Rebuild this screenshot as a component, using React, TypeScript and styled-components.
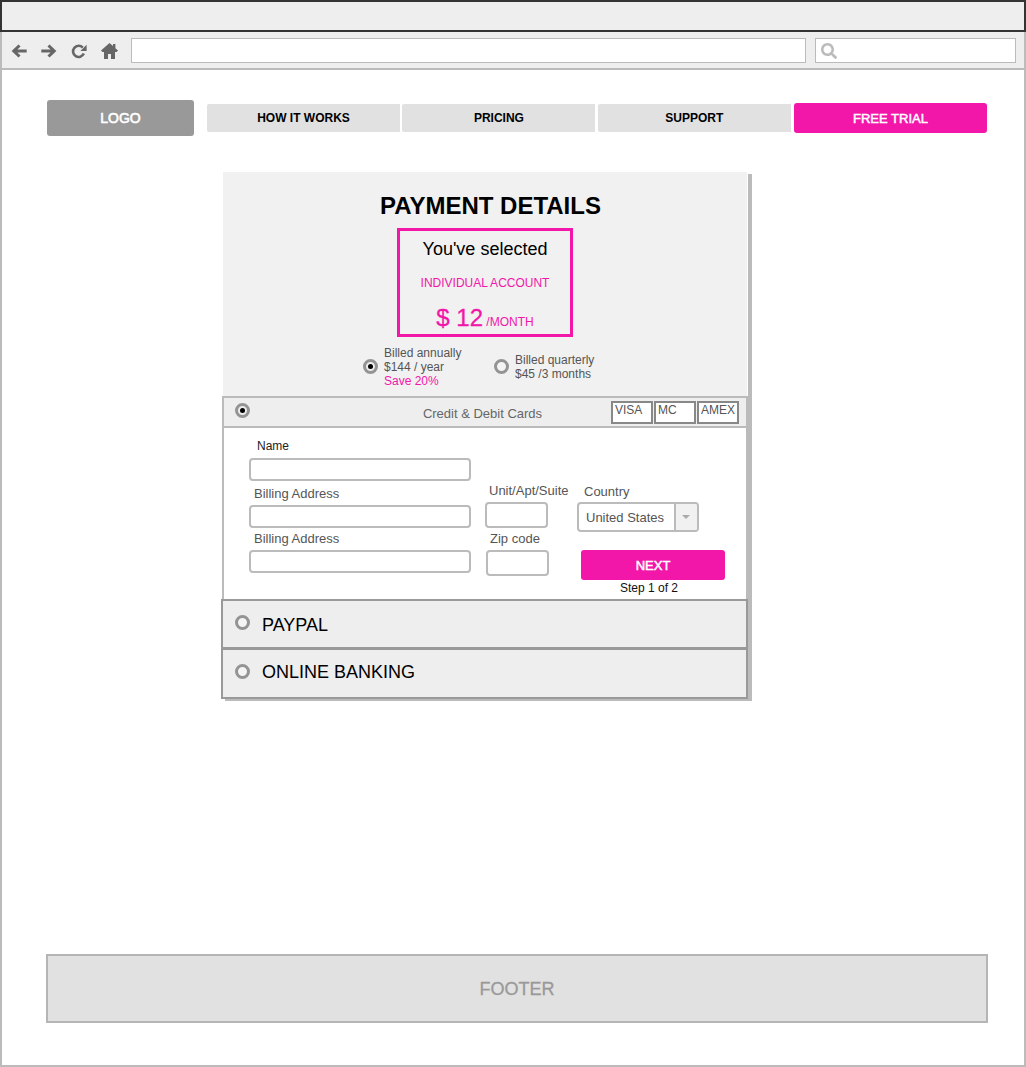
import React from "react";
import styled, { createGlobalStyle } from "styled-components";
import { FaSearch } from "react-icons/fa";

const PINK = "#f216a9";

const BackIcon = () => (
  <svg width="16" height="16" viewBox="0 0 16 16" fill="none" stroke="currentColor" strokeWidth="3">
    <path d="M8.5 2.5 L2.8 8 L8.5 13.5 M3.5 8 H15.7" />
  </svg>
);

const ForwardIcon = () => (
  <svg width="16" height="16" viewBox="0 0 16 16" fill="none" stroke="currentColor" strokeWidth="3">
    <path d="M7.5 2.5 L13.2 8 L7.5 13.5 M12.5 8 H0.3" />
  </svg>
);

const ReloadIcon = () => (
  <svg width="16" height="16" viewBox="0 0 16 16">
    <path d="M11.8 4.6 A5.6 5.6 0 1 0 12.8 10.6" fill="none" stroke="currentColor" strokeWidth="2.6" />
    <path d="M15.6 1.8 V8 H9.4 Z" fill="currentColor" />
  </svg>
);

const HomeIcon = () => (
  <svg width="17" height="16" viewBox="0 0 17 16" fill="currentColor">
    <path d="M8.5 0 L12 3.1 V1 H14.4 V5.3 L17 7.6 L15.6 9 H14 V16 H10 V11 H7 V16 H3 V9 H1.4 L0 7.6 Z" />
  </svg>
);

const App = () => {
  return (
    <Frame>
      <GlobalStyle />
      <TitleBar />
      <Toolbar>
        <ToolIcons>
          <BackIcon />
          <ForwardIcon />
          <ReloadIcon />
          <HomeIcon />
        </ToolIcons>
        <AddressBox />
        <SearchBox>
          <FaSearch />
        </SearchBox>
      </Toolbar>
      <Page>
        <Header>
          <Logo>LOGO</Logo>
          <Nav>
            <NavItem>HOW IT WORKS</NavItem>
            <NavItem>PRICING</NavItem>
            <NavItem>SUPPORT</NavItem>
            <TrialButton>FREE TRIAL</TrialButton>
          </Nav>
        </Header>
        <Card>
          <Summary>
            <Title>PAYMENT DETAILS</Title>
            <SelectedBox>
              <SelectedLabel>You've selected</SelectedLabel>
              <AccountName>INDIVIDUAL ACCOUNT</AccountName>
              <Price>
                $ 12<small> /MONTH</small>
              </Price>
            </SelectedBox>
            <BillingRow>
              <BillingOption>
                <BillingRadio $checked />
                <BillingText>
                  Billed annually
                  <br />
                  $144 / year
                  <br />
                  <Save>Save 20%</Save>
                </BillingText>
              </BillingOption>
              <BillingOption>
                <BillingRadio />
                <BillingText>
                  Billed quarterly
                  <br />
                  $45 /3 months
                </BillingText>
              </BillingOption>
            </BillingRow>
          </Summary>
          <CardsHead>
            <RadioSlot>
              <Radio $checked />
            </RadioSlot>
            <CardsTitle>Credit &amp; Debit Cards</CardsTitle>
            <Badges>
              <Badge>VISA</Badge>
              <Badge>MC</Badge>
              <Badge>AMEX</Badge>
            </Badges>
          </CardsHead>
          <FormPanel>
            <WideColumn>
              <NameLabel>Name</NameLabel>
              <WideInput />
              <Label $left={5} $top={6} $bottom={4}>
                Billing Address
              </Label>
              <WideInput />
              <Label $left={5} $top={4} $bottom={4}>
                Billing Address
              </Label>
              <WideInput />
            </WideColumn>
            <SmallColumn>
              <Label $left={4} $bottom={4}>
                Unit/Apt/Suite
              </Label>
              <SmallInput />
              <Label $left={5} $top={4} $bottom={4}>
                Zip code
              </Label>
              <SmallInput $shift={1} />
            </SmallColumn>
            <ActionColumn>
              <Label $left={7} $bottom={4}>
                Country
              </Label>
              <Select>
                <SelectValue>United States</SelectValue>
                <SelectArrow />
              </Select>
              <NextButton>NEXT</NextButton>
              <StepText>Step 1 of 2</StepText>
            </ActionColumn>
          </FormPanel>
          <MethodRow>
            <Radio />
            <MethodName>PAYPAL</MethodName>
          </MethodRow>
          <MethodRow $last>
            <Radio />
            <MethodName $raised>ONLINE BANKING</MethodName>
          </MethodRow>
        </Card>
        <Footer>FOOTER</Footer>
      </Page>
    </Frame>
  );
};

export default App;

const GlobalStyle = createGlobalStyle`
  html, body {
    margin: 0;
    padding: 0;
    background: #fff;
  }
  * {
    box-sizing: border-box;
  }
`;

const Frame = styled.div`
  width: 1026px;
  height: 1067px;
  display: flex;
  flex-direction: column;
  background: #fff;
  border: 2px solid #bbb;
  border-top: 0;
  font-family: "Liberation Sans", Arial, sans-serif;
`;

const TitleBar = styled.div`
  height: 32px;
  margin: 0 -2px;
  background: #eee;
  border: 2px solid #333;
`;

const Toolbar = styled.div`
  height: 38px;
  display: flex;
  align-items: flex-start;
  padding: 6px 8px 0 8px;
  background: #eee;
  border-bottom: 2px solid #bbb;
`;

const ToolIcons = styled.div`
  width: 121px;
  height: 25px;
  display: flex;
  align-items: center;
  gap: 14px;
  padding-left: 1px;
  color: #666;
  svg {
    flex: none;
  }
`;

const AddressBox = styled.div`
  width: 675px;
  height: 25px;
  background: #fff;
  border: 1px solid #bbb;
`;

const SearchBox = styled.div`
  width: 201px;
  height: 25px;
  margin-left: 9px;
  display: flex;
  align-items: center;
  padding-left: 5px;
  background: #fff;
  border: 1px solid #bbb;
  color: #bbb;
  font-size: 16px;
`;

const Page = styled.div`
  flex: 1;
  display: flex;
  flex-direction: column;
  padding: 30px 36px 42px 45px;
`;

const Header = styled.div`
  display: flex;
  align-items: center;
  gap: 13px;
`;

const Logo = styled.div`
  width: 147px;
  height: 36px;
  display: flex;
  align-items: center;
  justify-content: center;
  background: #999;
  border-radius: 3px;
  color: #fff;
  font-size: 14px;
  -webkit-text-stroke: 0.6px #fff;
`;

const Nav = styled.nav`
  display: flex;
  align-items: center;
  gap: 2.4px;
`;

const NavItem = styled.div`
  width: 193px;
  height: 28px;
  display: flex;
  align-items: center;
  justify-content: center;
  background: #e1e1e1;
  border-radius: 2px 0 0 2px;
  color: #000;
  font-size: 12px;
  font-weight: 700;
`;

const TrialButton = styled.div`
  width: 193px;
  height: 30px;
  margin-left: 0.8px;
  display: flex;
  align-items: center;
  justify-content: center;
  background: ${PINK};
  border-radius: 3px;
  color: #fff;
  font-size: 13px;
  -webkit-text-stroke: 0.5px #fff;
`;

const Card = styled.section`
  width: 527px;
  margin: 36px 0 0 174px;
  box-shadow: 4px 2px 0 #bbb;
`;

const Summary = styled.div`
  height: 224px;
  margin-left: 2px;
  margin-right: 1px;
  display: flex;
  flex-direction: column;
  align-items: center;
  padding-top: 20px;
  background: #f1f1f1;
`;

const Title = styled.h1`
  margin: 0 0 0 11px;
  font-size: 24px;
  line-height: 28px;
  font-weight: 700;
  color: #000;
`;

const SelectedBox = styled.div`
  width: 176px;
  height: 109px;
  margin-top: 8px;
  display: flex;
  flex-direction: column;
  align-items: center;
  border: 3px solid ${PINK};
  color: ${PINK};
`;

const SelectedLabel = styled.div`
  margin-top: 7px;
  font-size: 18px;
  line-height: 22px;
  color: #000;
`;

const AccountName = styled.div`
  margin-top: 16px;
  font-size: 12px;
  line-height: 14px;
`;

const Price = styled.div`
  margin-top: 13px;
  font-size: 24px;
  line-height: 29px;
  -webkit-text-stroke: 0.3px ${PINK};
  small {
    font-size: 12px;
    -webkit-text-stroke: 0;
  }
`;

const BillingRow = styled.div`
  width: 100%;
  display: flex;
  align-items: center;
  padding-left: 140px;
  margin-top: 9px;
`;

const BillingOption = styled.div`
  width: 131px;
  display: flex;
  align-items: center;
  gap: 6px;
`;

const BillingText = styled.div`
  font-size: 12px;
  line-height: 14px;
  color: #555;
`;

const Save = styled.span`
  color: ${PINK};
`;

const Radio = styled.span<{ $checked?: boolean }>`
  flex: none;
  width: 15px;
  height: 15px;
  display: flex;
  align-items: center;
  justify-content: center;
  border: 3.5px solid #949494;
  border-radius: 50%;
  background: ${(props) => (props.$checked ? "#eee" : "#f4f4f4")};
  &::after {
    content: "";
    display: ${(props) => (props.$checked ? "block" : "none")};
    width: 5px;
    height: 5px;
    border-radius: 50%;
    background: #000;
  }
`;

const BillingRadio = styled(Radio)`
  margin-bottom: 2px;
`;

const CardsHead = styled.div`
  height: 32px;
  margin-left: 1px;
  display: flex;
  align-items: flex-start;
  padding: 5px 7px 0 11px;
  background: #eee;
  border: 2px solid #bbb;
`;

const RadioSlot = styled.div`
  width: 15px;
`;

const CardsTitle = styled.div`
  width: 361px;
  padding: 4px 0 0 104px;
  text-align: center;
  font-size: 13px;
  line-height: 14px;
  color: #666;
`;

const Badges = styled.div`
  display: flex;
  gap: 1px;
  margin-top: -2px;
`;

const Badge = styled.div`
  width: 42px;
  height: 23px;
  padding: 0 0 0 2px;
  background: #fff;
  border: 2px solid #888;
  font-size: 12px;
  line-height: 14px;
  color: #555;
`;

const FormPanel = styled.div`
  height: 172px;
  margin-left: 1px;
  display: flex;
  padding-left: 25px;
  background: #fff;
  border-left: 2px solid #bbb;
  border-right: 2px solid #bbb;
`;

const WideColumn = styled.div`
  width: 222px;
  display: flex;
  flex-direction: column;
  padding-top: 11px;
`;

const SmallColumn = styled.div`
  width: 92px;
  margin-left: 14px;
  display: flex;
  flex-direction: column;
  padding-top: 56px;
`;

const ActionColumn = styled.div`
  width: 148px;
  display: flex;
  flex-direction: column;
  align-items: flex-start;
  padding-top: 57px;
`;

const Label = styled.div<{ $left?: number; $top?: number; $bottom?: number }>`
  margin: ${(props) => props.$top ?? 0}px 0 ${(props) => props.$bottom ?? 5}px ${(props) => props.$left ?? 0}px;
  font-size: 13px;
  line-height: 14px;
  white-space: nowrap;
  color: #555;
`;

const NameLabel = styled.div`
  margin: 0 0 5px 8px;
  font-size: 12px;
  line-height: 14px;
  color: #222;
`;

const WideInput = styled.div`
  width: 222px;
  height: 23px;
  background: #fff;
  border: 2px solid #bbb;
  border-radius: 4px;
`;

const SmallInput = styled.div<{ $shift?: number }>`
  width: 63px;
  height: 26px;
  margin-left: ${(props) => props.$shift ?? 0}px;
  background: #fff;
  border: 2px solid #bbb;
  border-radius: 4px;
`;

const Select = styled.div`
  width: 122px;
  height: 30px;
  margin-top: -1px;
  display: flex;
  overflow: hidden;
  border: 2px solid #bbb;
  border-radius: 4px;
`;

const SelectValue = styled.div`
  flex: 1;
  padding-left: 7px;
  font-size: 13px;
  line-height: 27px;
  color: #555;
`;

const SelectArrow = styled.div`
  position: relative;
  width: 23px;
  background: #f1f1f1;
  border-left: 2px solid #bbb;
  &::after {
    content: "";
    position: absolute;
    left: 6px;
    top: 11px;
    border: 4px solid transparent;
    border-top: 4px solid #aaa;
  }
`;

const NextButton = styled.div`
  width: 144px;
  height: 30px;
  margin: 18px 0 0 4px;
  display: flex;
  align-items: center;
  justify-content: center;
  background: ${PINK};
  border-radius: 3px;
  color: #fff;
  font-size: 13px;
  -webkit-text-stroke: 0.5px #fff;
`;

const StepText = styled.div`
  width: 144px;
  margin-top: 1px;
  text-align: center;
  font-size: 12px;
  line-height: 14px;
  color: #111;
`;

const MethodRow = styled.div<{ $last?: boolean }>`
  height: ${(props) => (props.$last ? 51 : 50)}px;
  margin-top: -1px;
  display: flex;
  align-items: flex-start;
  gap: 12px;
  padding: 14px 0 0 12px;
  background: #eee;
  border: 2px solid #999;
`;

const MethodName = styled.div<{ $raised?: boolean }>`
  margin-top: ${(props) => (props.$raised ? -2 : 0)}px;
  font-size: 18px;
  line-height: 20px;
  color: #000;
`;

const Footer = styled.footer`
  width: 942px;
  height: 69px;
  margin: auto 0 0 -1px;
  padding-top: 1px;
  display: flex;
  align-items: center;
  justify-content: center;
  background: #e1e1e1;
  border: 2px solid #b5b5b5;
  color: #999;
  font-size: 18px;
  -webkit-text-stroke: 0.3px #999;
`;
